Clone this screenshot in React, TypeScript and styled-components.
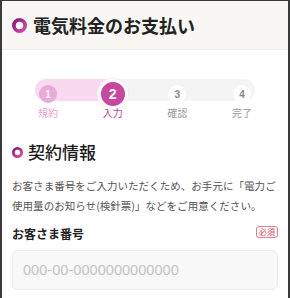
import React from "react";
import styled, { createGlobalStyle } from "styled-components";

const GlobalStyle = createGlobalStyle`
  html, body {
    margin: 0;
    padding: 0;
    background: #ffffff;
  }
  body {
    font-family: "Noto Sans CJK JP", "Noto Sans", sans-serif;
  }
`;

const Frame = styled.div`
  box-sizing: border-box;
  width: 290px;
  height: 298px;
  overflow: hidden;
  border-top: 1px solid #3a3a3a;
  border-left: 2px solid #3a3a3a;
  border-right: 2px solid #3a3a3a;
  background: #fff;
`;

const Header = styled.header`
  height: 48px;
  display: flex;
  align-items: center;
  gap: 6px;
  padding-left: 10px;
  background: #f8f7f3;
  border-bottom: 1px solid #eeeeee;
`;

const Title = styled.h1`
  margin: 0;
  font-size: 18px;
  font-weight: 700;
  color: #222;
  line-height: 1;
`;

const Body = styled.main`
  padding: 0 10px;
`;

const Steps = styled.div`
  margin: 29px 0 0 23px;
  width: 220px;
`;

const Track = styled.div`
  height: 22px;
  border-radius: 11px;
  background: linear-gradient(to right, #f9d9ef 0 78px, #f4f4f4 78px);
  display: grid;
  grid-template-columns: repeat(4, 26px);
  justify-content: space-between;
  align-items: center;
  justify-items: center;
`;

const Dot = styled.span<{ $state: "done" | "current" | "todo" }>`
  box-sizing: border-box;
  display: flex;
  align-items: center;
  justify-content: center;
  border-radius: 50%;
  font-family: "Liberation Sans", "Noto Sans", sans-serif;
  font-weight: 700;
  width: ${(p) => (p.$state === "current" ? "30px" : "18px")};
  height: ${(p) => (p.$state === "current" ? "30px" : "18px")};
  font-size: ${(p) => (p.$state === "current" ? "14px" : "10px")};
  background: ${(p) =>
    p.$state === "current" ? "#c8489f" : p.$state === "done" ? "#eaa9d6" : "#ffffff"};
  color: ${(p) => (p.$state === "todo" ? "#8a8a8a" : "#ffffff")};
  border: ${(p) => (p.$state === "current" ? "3px solid #ffffff" : "none")};
  box-shadow: ${(p) => (p.$state === "current" ? "0 0 0 1px #f3eef1" : "none")};
`;

const Labels = styled.div`
  margin-top: 5px;
  display: grid;
  grid-template-columns: repeat(4, 26px);
  justify-content: space-between;
  justify-items: center;
`;

const Label = styled.span<{ $color: string }>`
  font-size: 10px;
  line-height: 14px;
  white-space: nowrap;
  color: ${(p) => p.$color};
`;

const SectionTitle = styled.h2`
  margin: 20px 0 0;
  display: flex;
  align-items: center;
  gap: 5px;
  font-size: 17px;
  font-weight: 500;
  line-height: 24px;
  color: #1c1c1c;
`;

const Lead = styled.p`
  margin: 12px 0 0;
  font-size: 10.55px;
  line-height: 20px;
  color: #555;
`;

const FieldHead = styled.div`
  margin-top: 9px;
  display: flex;
  align-items: center;
  justify-content: space-between;
`;

const FieldLabel = styled.label`
  font-size: 12px;
  font-weight: 700;
  line-height: 18px;
  color: #222;
`;

const Required = styled.span`
  font-size: 8px;
  line-height: 10px;
  padding: 0 2px;
  border: 1px solid #e27d8e;
  border-radius: 3px;
  color: #d9445a;
  margin-top: -5px;
`;

const Input = styled.input`
  box-sizing: border-box;
  margin-top: 7px;
  width: 266px;
  height: 40px;
  padding: 0 10px;
  border: 1px solid #ececec;
  border-radius: 6px;
  background: #f8f8f8;
  font-family: "Liberation Sans", "Noto Sans", sans-serif;
  font-size: 14.6px;
  outline: none;
  &::placeholder {
    color: #c4c4c4;
  }
`;

const Ring = ({ size, stroke }: { size: number; stroke: number }) => (
  <svg width={size} height={size} viewBox="0 0 20 20">
    <defs>
      <linearGradient id={`rg${size}`} x1="0" y1="0" x2="1" y2="1">
        <stop offset="0" stopColor="#8e1675" />
        <stop offset="1" stopColor="#d44ba9" />
      </linearGradient>
    </defs>
    <circle cx="10" cy="10" r={10 - stroke / 2} fill="none" stroke={`url(#rg${size})`} strokeWidth={stroke} />
  </svg>
);

const steps = [
  { n: 1, label: "規約", state: "done" as const, color: "#e7a3d2" },
  { n: 2, label: "入力", state: "current" as const, color: "#c23d98" },
  { n: 3, label: "確認", state: "todo" as const, color: "#9a9a9a" },
  { n: 4, label: "完了", state: "todo" as const, color: "#9a9a9a" },
];

export default function App() {
  return (
    <>
      <GlobalStyle />
      <Frame>
        <Header>
          <Ring size={15} stroke={5} />
          <Title>電気料金のお支払い</Title>
        </Header>
        <Body>
          <Steps>
            <Track>
              {steps.map((s) => (
                <Dot key={s.n} $state={s.state}>
                  {s.n}
                </Dot>
              ))}
            </Track>
            <Labels>
              {steps.map((s) => (
                <Label key={s.n} $color={s.color}>
                  {s.label}
                </Label>
              ))}
            </Labels>
          </Steps>

          <SectionTitle>
            <Ring size={11} stroke={5} />
            契約情報
          </SectionTitle>
          <Lead>
            お客さま番号をご入力いただくため、お手元に「電力ご使用量のお知らせ(検針票)」などをご用意ください。
          </Lead>

          <FieldHead>
            <FieldLabel>お客さま番号</FieldLabel>
            <Required>必須</Required>
          </FieldHead>
          <Input placeholder="000-00-0000000000000" />
        </Body>
      </Frame>
    </>
  );
}
